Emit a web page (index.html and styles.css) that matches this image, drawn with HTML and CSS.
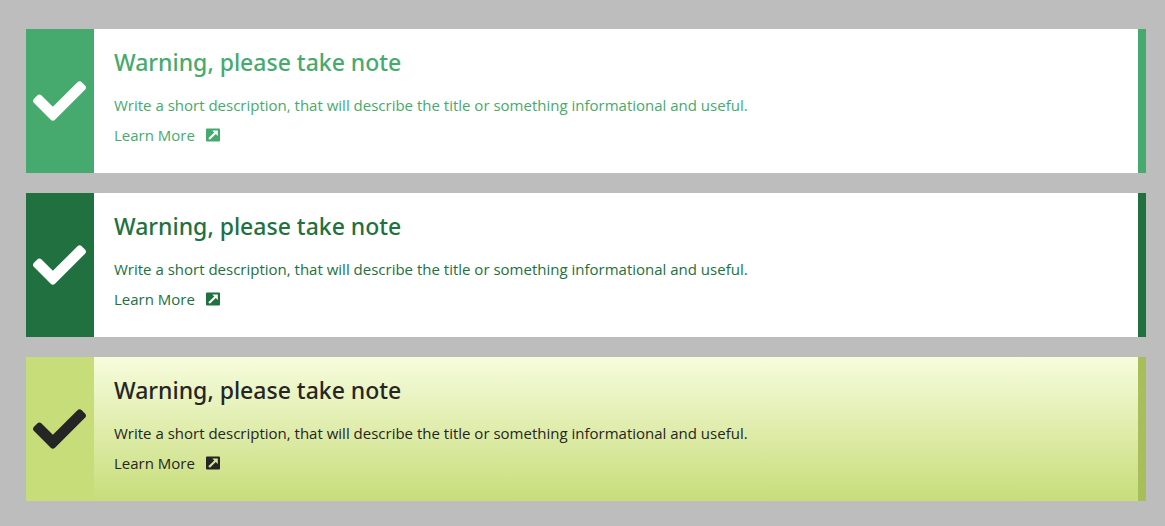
FILE: index.html
```
<!DOCTYPE html>
<html lang="en">
<head>
<meta charset="utf-8">
<title>Alerts</title>
<link rel="stylesheet" href="styles.css">
</head>
<body>
<svg class="defs" aria-hidden="true">
  <symbol id="check" viewBox="0 65 512 382"><path d="M173.898 439.404l-166.4-166.4c-9.997-9.997-9.997-26.206 0-36.204l36.203-36.204c9.997-9.998 26.207-9.998 36.204 0L192 312.69 432.095 72.596c9.997-9.997 26.207-9.997 36.204 0l36.203 36.204c9.997 9.997 9.997 26.206 0 36.204l-294.4 294.401c-9.998 9.997-26.207 9.997-36.204-.001z"/></symbol>
  <symbol id="external" viewBox="0 0 14 14"><path fill-rule="evenodd" d="M1 0.5H13Q14 0.5 14 1.5V12.5Q14 13.500 13 13.500H1Q0 13.500 0 12.500V1.500Q0 .5 1 .5ZM6.300 2.500L8.300 4.500L2.300 10.200L3.900 11.800L9.800 6L11.800 8V2.500Z"/></symbol>
</svg>
<main class="alerts">
  <section class="alert alert-light">
    <div class="alert-icon"><svg class="check"><use href="#check"/></svg></div>
    <div class="alert-body">
      <h2 class="alert-title">Warning, please take note</h2>
      <p class="alert-text">Write a short description, that will describe the title or something informational and useful.</p>
      <a class="alert-link" href="#">Learn More <svg class="external"><use href="#external"/></svg></a>
    </div>
  </section>
  <section class="alert alert-dark">
    <div class="alert-icon"><svg class="check"><use href="#check"/></svg></div>
    <div class="alert-body">
      <h2 class="alert-title">Warning, please take note</h2>
      <p class="alert-text">Write a short description, that will describe the title or something informational and useful.</p>
      <a class="alert-link" href="#">Learn More <svg class="external"><use href="#external"/></svg></a>
    </div>
  </section>
  <section class="alert alert-lime">
    <div class="alert-icon"><svg class="check"><use href="#check"/></svg></div>
    <div class="alert-body">
      <h2 class="alert-title">Warning, please take note</h2>
      <p class="alert-text">Write a short description, that will describe the title or something informational and useful.</p>
      <a class="alert-link" href="#">Learn More <svg class="external"><use href="#external"/></svg></a>
    </div>
  </section>
</main>
</body>
</html>
```

FILE: styles.css
```
* {
  box-sizing: border-box;
}

body {
  margin: 0;
  background: #bdbdbd;
  font-family: "Segoe UI", "Open Sans", "Noto Sans", sans-serif;
  font-size: 15px;
  font-weight: 400;
}

.defs {
  display: none;
}

.alerts {
  display: flex;
  flex-direction: column;
  gap: 20px;
  padding: 29px 19px 25px 26px;
}

.alert {
  display: flex;
  color: var(--text);
  background: var(--surface);
  border-right: 8px solid var(--edge);
}

.alert-light {
  --text: #46aa6e;
  --accent: #46aa6e;
  --edge: #46aa6e;
  --surface: #fff;
  --icon: #fff;
}

.alert-dark {
  --text: #20713f;
  --accent: #20713f;
  --edge: #20713f;
  --surface: #fff;
  --icon: #fff;
}

.alert-lime {
  --text: #252525;
  --accent: #c7dd7a;
  --edge: #a8be5a;
  --surface: linear-gradient(#f7fcdd, #c7dd7a);
  --icon: #252525;
}

.alert-icon {
  display: flex;
  flex: none;
  align-items: center;
  justify-content: center;
  width: 68px;
  padding-right: 1px;
  background: var(--accent);
  color: var(--icon);
}

.check {
  width: 53px;
  height: 40px;
  fill: currentColor;
}

.alert-body {
  padding: 17px 20px 23px;
}

.alert-title {
  margin: 0 0 12px;
  font-family: "Segoe UI", "Noto Sans", sans-serif;
  font-size: 23px;
  font-weight: 500;
  line-height: 32px;
}

.alert-text {
  margin: 0;
  line-height: 30px;
}

.alert-link {
  display: inline-flex;
  align-items: center;
  gap: 11px;
  color: inherit;
  line-height: 30px;
  text-decoration: none;
}

.external {
  width: 14px;
  height: 14px;
  fill: currentColor;
}
```
